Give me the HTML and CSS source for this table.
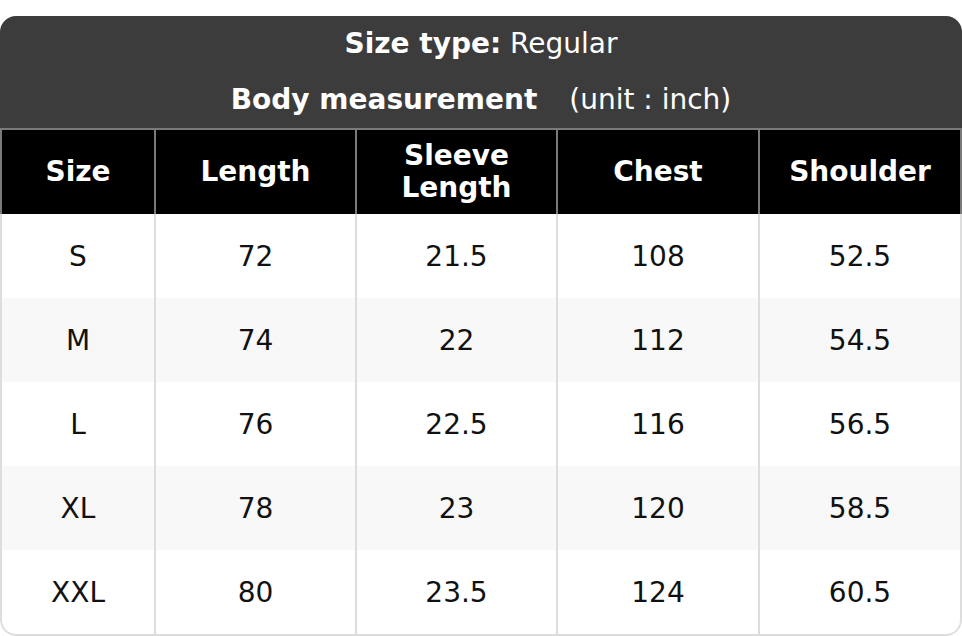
FILE: index.html
```
<!DOCTYPE html>
<html>
<head>
<meta charset="utf-8">
<link rel="stylesheet" href="styles.css">
</head>
<body>
<div class="card">
  <div class="banner">
    <div class="line"><b>Size type:</b> Regular</div>
    <div class="line"><b>Body measurement</b><span class="unit">(unit : inch)</span></div>
  </div>
  <table class="chart">
    <thead>
      <tr>
        <th class="c1">Size</th>
        <th class="c2">Length</th>
        <th class="c3">Sleeve<br>Length</th>
        <th class="c4">Chest</th>
        <th class="c5">Shoulder</th>
      </tr>
    </thead>
    <tbody>
      <tr><td>S</td><td>72</td><td>21.5</td><td>108</td><td>52.5</td></tr>
      <tr class="alt"><td>M</td><td>74</td><td>22</td><td>112</td><td>54.5</td></tr>
      <tr><td>L</td><td>76</td><td>22.5</td><td>116</td><td>56.5</td></tr>
      <tr class="alt"><td>XL</td><td>78</td><td>23</td><td>120</td><td>58.5</td></tr>
      <tr class="last"><td>XXL</td><td>80</td><td>23.5</td><td>124</td><td>60.5</td></tr>
    </tbody>
  </table>
</div>
</body>
</html>
```
FILE: styles.css
```
html, body {
  margin: 0;
  padding: 0;
  background: #ffffff;
}
body {
  font-family: "DejaVu Sans", Verdana, sans-serif;
  font-size: 28px;
}
.card {
  margin-top: 16px;
  width: 962px;
  border-radius: 16px;
  overflow: hidden;
}
.banner {
  background: #3c3c3c;
  color: #ffffff;
  text-align: center;
}
.line {
  height: 56px;
  line-height: 56px;
}
.line b {
  font-weight: bold;
}
.unit {
  margin-left: 32px;
}
.chart {
  width: 962px;
  border-collapse: separate;
  border-spacing: 0;
  table-layout: fixed;
}
.chart th, .chart td {
  box-sizing: border-box;
  text-align: center;
  vertical-align: middle;
  padding: 0;
}
.chart th {
  background: #000000;
  color: #ffffff;
  font-weight: bold;
  height: 86px;
  line-height: 32px;
  border-top: 2px solid #7a7a7a;
  border-right: 2px solid #7a7a7a;
}
.chart th.c1 {
  border-left: 2px solid #7a7a7a;
  width: 156px;
}
.chart th.c2 { width: 201px; }
.chart th.c3 { width: 201px; }
.chart th.c4 { width: 202px; }
.chart th.c5 { width: 202px; }
.chart td {
  color: #111111;
  height: 84px;
  border-right: 2px solid #dddddd;
  background: #ffffff;
}
.chart td:first-child {
  border-left: 2px solid #dddddd;
}
.chart tr.alt td {
  background: #f8f8f8;
}
.chart tr.last td {
  height: 86px;
  border-bottom: 2px solid #dddddd;
}
.chart tr.last td:first-child {
  border-bottom-left-radius: 16px;
}
.chart tr.last td:last-child {
  border-bottom-right-radius: 16px;
}
```
